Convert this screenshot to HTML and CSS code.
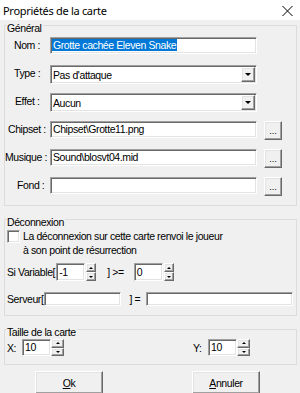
FILE: index.html
```html
<!DOCTYPE html>
<html lang="fr">
<head>
  <meta charset="UTF-8" />
  <meta name="viewport" content="width=device-width, initial-scale=1.0"/>
  <title>Propriétés de la carte</title>
  <link rel="stylesheet" href="styles.css">
</head>
<body>

  <div class="titlebar">
    <span class="title">Propriétés de la carte</span>
    <svg class="close" width="11" height="10" viewBox="0 0 11 10">
      <path d="M0.5 0 L10.5 10 M10.5 0 L0.5 10" stroke="#000" stroke-width="1" fill="none"/>
    </svg>
  </div>

  <fieldset class="group">
    <legend>Général</legend>
    <div class="rows general">
      <div class="row">
        <label class="lbl ind-9">Nom :</label>
        <div class="edit wide"><span class="selected">Grotte cachée Eleven Snake</span></div>
      </div>
      <div class="row">
        <label class="lbl ind-9">Type :</label>
        <div class="combo wide">
          <span class="combo-text">Pas d'attaque</span>
          <span class="combo-btn raised"><i class="arrow-down"></i></span>
        </div>
      </div>
      <div class="row">
        <label class="lbl ind-10">Effet :</label>
        <div class="combo wide">
          <span class="combo-text">Aucun</span>
          <span class="combo-btn raised"><i class="arrow-down"></i></span>
        </div>
      </div>
      <div class="row">
        <label class="lbl ind-3">Chipset :</label>
        <div class="edit wide">Chipset\Grotte11.png</div>
        <button class="browse raised">...</button>
      </div>
      <div class="row">
        <label class="lbl">Musique :</label>
        <div class="edit wide">Sound\blosvt04.mid</div>
        <button class="browse raised">...</button>
      </div>
      <div class="row">
        <label class="lbl ind-12">Fond :</label>
        <div class="edit wide"></div>
        <button class="browse raised">...</button>
      </div>
    </div>
  </fieldset>

  <fieldset class="group">
    <legend>Déconnexion</legend>
    <div class="rows deco">
      <div class="check-row">
        <span class="check"></span>
        <span class="check-text">La déconnexion sur cette carte renvoi le joueur<br>à son point de résurrection</span>
      </div>
      <div class="var-row">
        <span>Si Variable[</span>
        <div class="edit num">-1</div>
        <div class="spin narrow">
          <span class="spin-btn raised"><i class="arrow-up"></i></span>
          <span class="spin-btn raised"><i class="arrow-dn"></i></span>
        </div>
        <span class="op-ge">] &gt;=</span>
        <div class="edit num">0</div>
        <div class="spin narrow">
          <span class="spin-btn raised"><i class="arrow-up"></i></span>
          <span class="spin-btn raised"><i class="arrow-dn"></i></span>
        </div>
      </div>
      <div class="srv-row">
        <span>Serveur[</span>
        <div class="edit srv-name"></div>
        <span class="op-eq">] =</span>
        <div class="edit srv-value"></div>
      </div>
    </div>
  </fieldset>

  <fieldset class="group">
    <legend>Taille de la carte</legend>
    <div class="rows size">
      <div class="size-row">
        <span class="axis">X:</span>
        <div class="edit size-edit">10</div>
        <div class="spin wide-spin">
          <span class="spin-btn raised"><i class="arrow-up"></i></span>
          <span class="spin-btn raised"><i class="arrow-dn"></i></span>
        </div>
        <span class="axis axis-y">Y:</span>
        <div class="edit size-edit">10</div>
        <div class="spin wide-spin">
          <span class="spin-btn raised"><i class="arrow-up"></i></span>
          <span class="spin-btn raised"><i class="arrow-dn"></i></span>
        </div>
      </div>
    </div>
  </fieldset>

  <div class="buttons">
    <button class="btn btn-ok raised"><u>O</u>k</button>
    <button class="btn btn-cancel raised"><u>A</u>nnuler</button>
  </div>

</body>
</html>
```

FILE: styles.css
```css
* {
  box-sizing: border-box;
}

body {
  margin: 0;
  width: 300px;
  height: 393px;
  overflow: hidden;
  background-color: #f0f0f0;
  font-family: "Liberation Sans", Arial, sans-serif;
  font-size: 10.5px;
  letter-spacing: -0.4px;
  color: #000;
}

/* title bar */
.titlebar {
  height: 20px;
  background-color: #fff;
  display: flex;
  align-items: center;
  justify-content: space-between;
  padding: 0 7px 0 3px;
}

.title {
  font-family: "Noto Sans", "Liberation Sans", sans-serif;
  font-size: 11px;
  letter-spacing: -0.3px;
}

.close {
  margin-top: 2px;
}

/* group boxes */
.group {
  margin: 4px 3px 0 4px;
  padding: 0;
  border: 1px solid #dcdcdc;
  min-width: 0;
}

.group:first-of-type {
  margin-top: -4px;
}

.group legend {
  padding: 6px 1px 0 0;
  margin-left: 2px;
  line-height: 12px;
}

.rows {
  display: flex;
  flex-direction: column;
}

.general {
  padding: 3px 0 9px;
  gap: 9px;
}

.row {
  display: flex;
  align-items: flex-start;
  height: 19px;
}

.lbl {
  width: 45px;
  flex: none;
  line-height: 17px;
  white-space: nowrap;
}

.ind-3 { padding-left: 3px; }
.ind-9 { padding-left: 9px; }
.ind-10 { padding-left: 10px; }
.ind-12 { padding-left: 12px; }

/* sunken controls */
.edit,
.combo,
.check {
  background-color: #fff;
  border: 1px solid;
  border-color: #a0a0a0 #fff #fff #a0a0a0;
  box-shadow: inset 1px 1px 0 #696969, inset -1px -1px 0 #e3e3e3;
}

.edit {
  height: 17px;
  line-height: 15px;
  padding-left: 2px;
  white-space: nowrap;
  overflow: hidden;
}

.wide {
  width: 207px;
  flex: none;
}

.selected {
  background-color: #0078d7;
  color: #fff;
  margin-left: -1px;
  padding: 0 1px;
}

.combo {
  height: 19px;
  display: flex;
  align-items: center;
  padding: 0 1px 0 2px;
}

.combo-btn {
  margin-left: auto;
  width: 14px;
  height: 15px;
  display: flex;
  align-items: center;
  justify-content: center;
}

/* raised buttons */
.raised {
  background-color: #f0f0f0;
  border: 1px solid;
  border-color: #fff #696969 #696969 #fff;
  box-shadow: inset -1px -1px 0 #a0a0a0, inset 1px 1px 0 #e3e3e3;
}

.browse {
  width: 18px;
  height: 19px;
  margin-left: 7px;
  padding: 0 0 3px;
  font-family: inherit;
  font-size: 9px;
  letter-spacing: 0;
  line-height: 9px;
  display: flex;
  align-items: flex-end;
  justify-content: center;
}

.arrow-down {
  display: block;
  width: 0;
  height: 0;
  border-style: solid;
  border-width: 3px 3px 0;
  border-color: #000 transparent transparent;
}

.arrow-up,
.arrow-dn {
  display: block;
  width: 0;
  height: 0;
  border-style: solid;
}

.arrow-up {
  border-width: 0 2px 2px;
  border-color: transparent transparent #000;
}

.arrow-dn {
  border-width: 2px 2px 0;
  border-color: #000 transparent transparent;
}

/* disconnect group */
.deco {
  padding: 1px 0 9px 2px;
}

.check-row {
  display: flex;
  align-items: flex-start;
  line-height: 14px;
}

.check {
  width: 13px;
  height: 13px;
  margin-top: 1px;
  flex: none;
}

.check-text {
  margin-left: 3px;
}

.var-row {
  display: flex;
  align-items: center;
  height: 18px;
  margin-top: 6px;
}

.num {
  width: 29px;
  height: 18px;
  line-height: 16px;
  margin-left: 1px;
}

.spin {
  display: flex;
  flex-direction: column;
  flex: none;
}

.spin-btn {
  flex: 1;
  display: flex;
  align-items: center;
  justify-content: center;
}

.narrow {
  width: 10px;
  height: 18px;
  margin-left: 1px;
}

.op-ge {
  margin: 0 9px 0 11px;
}

.srv-row {
  display: flex;
  align-items: center;
  height: 14px;
  margin-top: 11px;
}

.srv-name {
  width: 77px;
  height: 14px;
  margin-left: 1px;
}

.op-eq {
  margin: 0 6px 0 8px;
}

.srv-value {
  width: 147px;
  height: 14px;
}

/* map size group */
.size {
  padding: 1px 0 8px 2px;
}

.size-row {
  display: flex;
  align-items: center;
  height: 17px;
}

.axis {
  width: 15px;
}

.axis-y {
  margin-left: 129px;
}

.size-edit {
  width: 29px;
  height: 17px;
}

.wide-spin {
  width: 13px;
  height: 17px;
}

/* dialog buttons */
.buttons {
  display: flex;
  margin-top: 6px;
}

.btn {
  width: 68px;
  height: 23px;
  padding: 0;
  font-family: inherit;
  font-size: 10.5px;
  letter-spacing: -0.4px;
  color: #000;
}

.btn-ok {
  margin-left: 35px;
}

.btn-cancel {
  margin-left: 89px;
}
```
